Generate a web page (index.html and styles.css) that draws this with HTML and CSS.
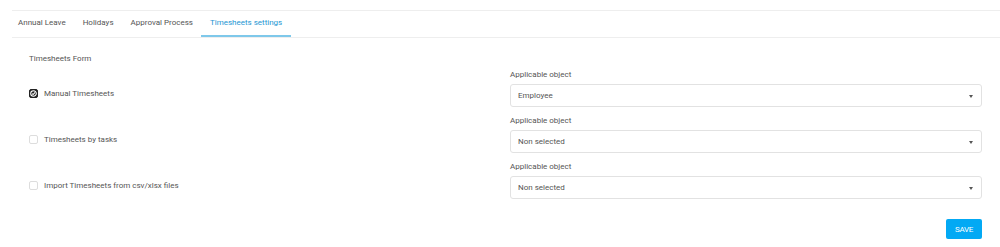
FILE: index.html
```html
<!DOCTYPE html>
<html lang="en">
<head>
    <meta charset="UTF-8">
    <title>Timesheets settings</title>
    <link rel="stylesheet" href="styles.css">
</head>
<body>
    <div class="page">
        <!-- Tabs -->
        <div class="tabs">
            <div class="tab">Annual Leave</div>
            <div class="tab">Holidays</div>
            <div class="tab">Approval Process</div>
            <div class="tab active">Timesheets settings</div>
        </div>

        <!-- Form -->
        <div class="panel">
            <div class="panel-title">Timesheets Form</div>

            <div class="row">
                <label class="check">
                    <span class="box checked">
                        <svg width="7" height="7" viewBox="0 0 8 8"><circle cx="4" cy="4" r="3.2" fill="none" stroke="#fff" stroke-width="1.2"/><path d="M2.4 4.1 L3.6 5.2 L5.8 2.7" fill="none" stroke="#fff" stroke-width="1.2"/></svg>
                    </span>
                    Manual Timesheets
                </label>
                <div class="field">
                    <div class="field-label">Applicable object</div>
                    <div class="select">Employee<span class="caret"></span></div>
                </div>
            </div>

            <div class="row">
                <label class="check">
                    <span class="box"></span>
                    Timesheets by tasks
                </label>
                <div class="field">
                    <div class="field-label">Applicable object</div>
                    <div class="select">Non selected<span class="caret"></span></div>
                </div>
            </div>

            <div class="row">
                <label class="check">
                    <span class="box"></span>
                    Import Timesheets from csv/xlsx files
                </label>
                <div class="field">
                    <div class="field-label">Applicable object</div>
                    <div class="select">Non selected<span class="caret"></span></div>
                </div>
            </div>

            <div class="actions">
                <button class="save">SAVE</button>
            </div>
        </div>
    </div>
</body>
</html>
```

FILE: styles.css
```css
body {
    margin: 0;
    background-color: #fff;
    font-family: Roboto, "Liberation Sans", sans-serif;
    font-size: 8px;
    color: #555;
}
.page {
    padding: 10px 0 0 12px;
}
.tabs {
    display: flex;
    border-top: 1px solid #eee;
    border-bottom: 1px solid #eee;
    height: 26px;
}
.tab {
    padding: 0 8.5px;
    line-height: 24px;
}
.tab:first-child {
    padding-left: 6px;
}
.tab.active {
    color: #1e96d3;
    border-bottom: 2px solid #7ec8ea;
}
.panel {
    padding: 15px 18px 0 17px;
}
.panel-title {
    line-height: 12px;
    margin-bottom: 2px;
}
.row {
    display: flex;
    justify-content: space-between;
    align-items: flex-end;
    margin-bottom: 6px;
}
.check {
    display: flex;
    align-items: center;
    gap: 6px;
    height: 23px;
    margin-bottom: 2px;
}
.box {
    width: 9px;
    height: 9px;
    border: 1px solid #ddd;
    border-radius: 2px;
    box-sizing: border-box;
    display: flex;
    align-items: center;
    justify-content: center;
}
.box.checked {
    background-color: #222;
    border-color: #222;
}
.field {
    width: 472px;
}
.field-label {
    line-height: 16px;
    margin-bottom: 1px;
}
.select {
    height: 23px;
    border: 1px solid #e2e2e2;
    border-radius: 3px;
    box-sizing: border-box;
    padding: 0 7px;
    line-height: 21px;
    position: relative;
}
.caret {
    position: absolute;
    right: 8px;
    top: 10px;
    border-left: 2.5px solid transparent;
    border-right: 2.5px solid transparent;
    border-top: 3px solid #555;
}
.actions {
    display: flex;
    justify-content: flex-end;
    margin-top: 20px;
}
.save {
    background-color: #03a9f4;
    color: #fff;
    border: none;
    border-radius: 2px;
    width: 36px;
    height: 20px;
    font-family: Roboto, "Liberation Sans", sans-serif;
    font-size: 8px;
    padding: 0;
    letter-spacing: -0.3px;
}
```
